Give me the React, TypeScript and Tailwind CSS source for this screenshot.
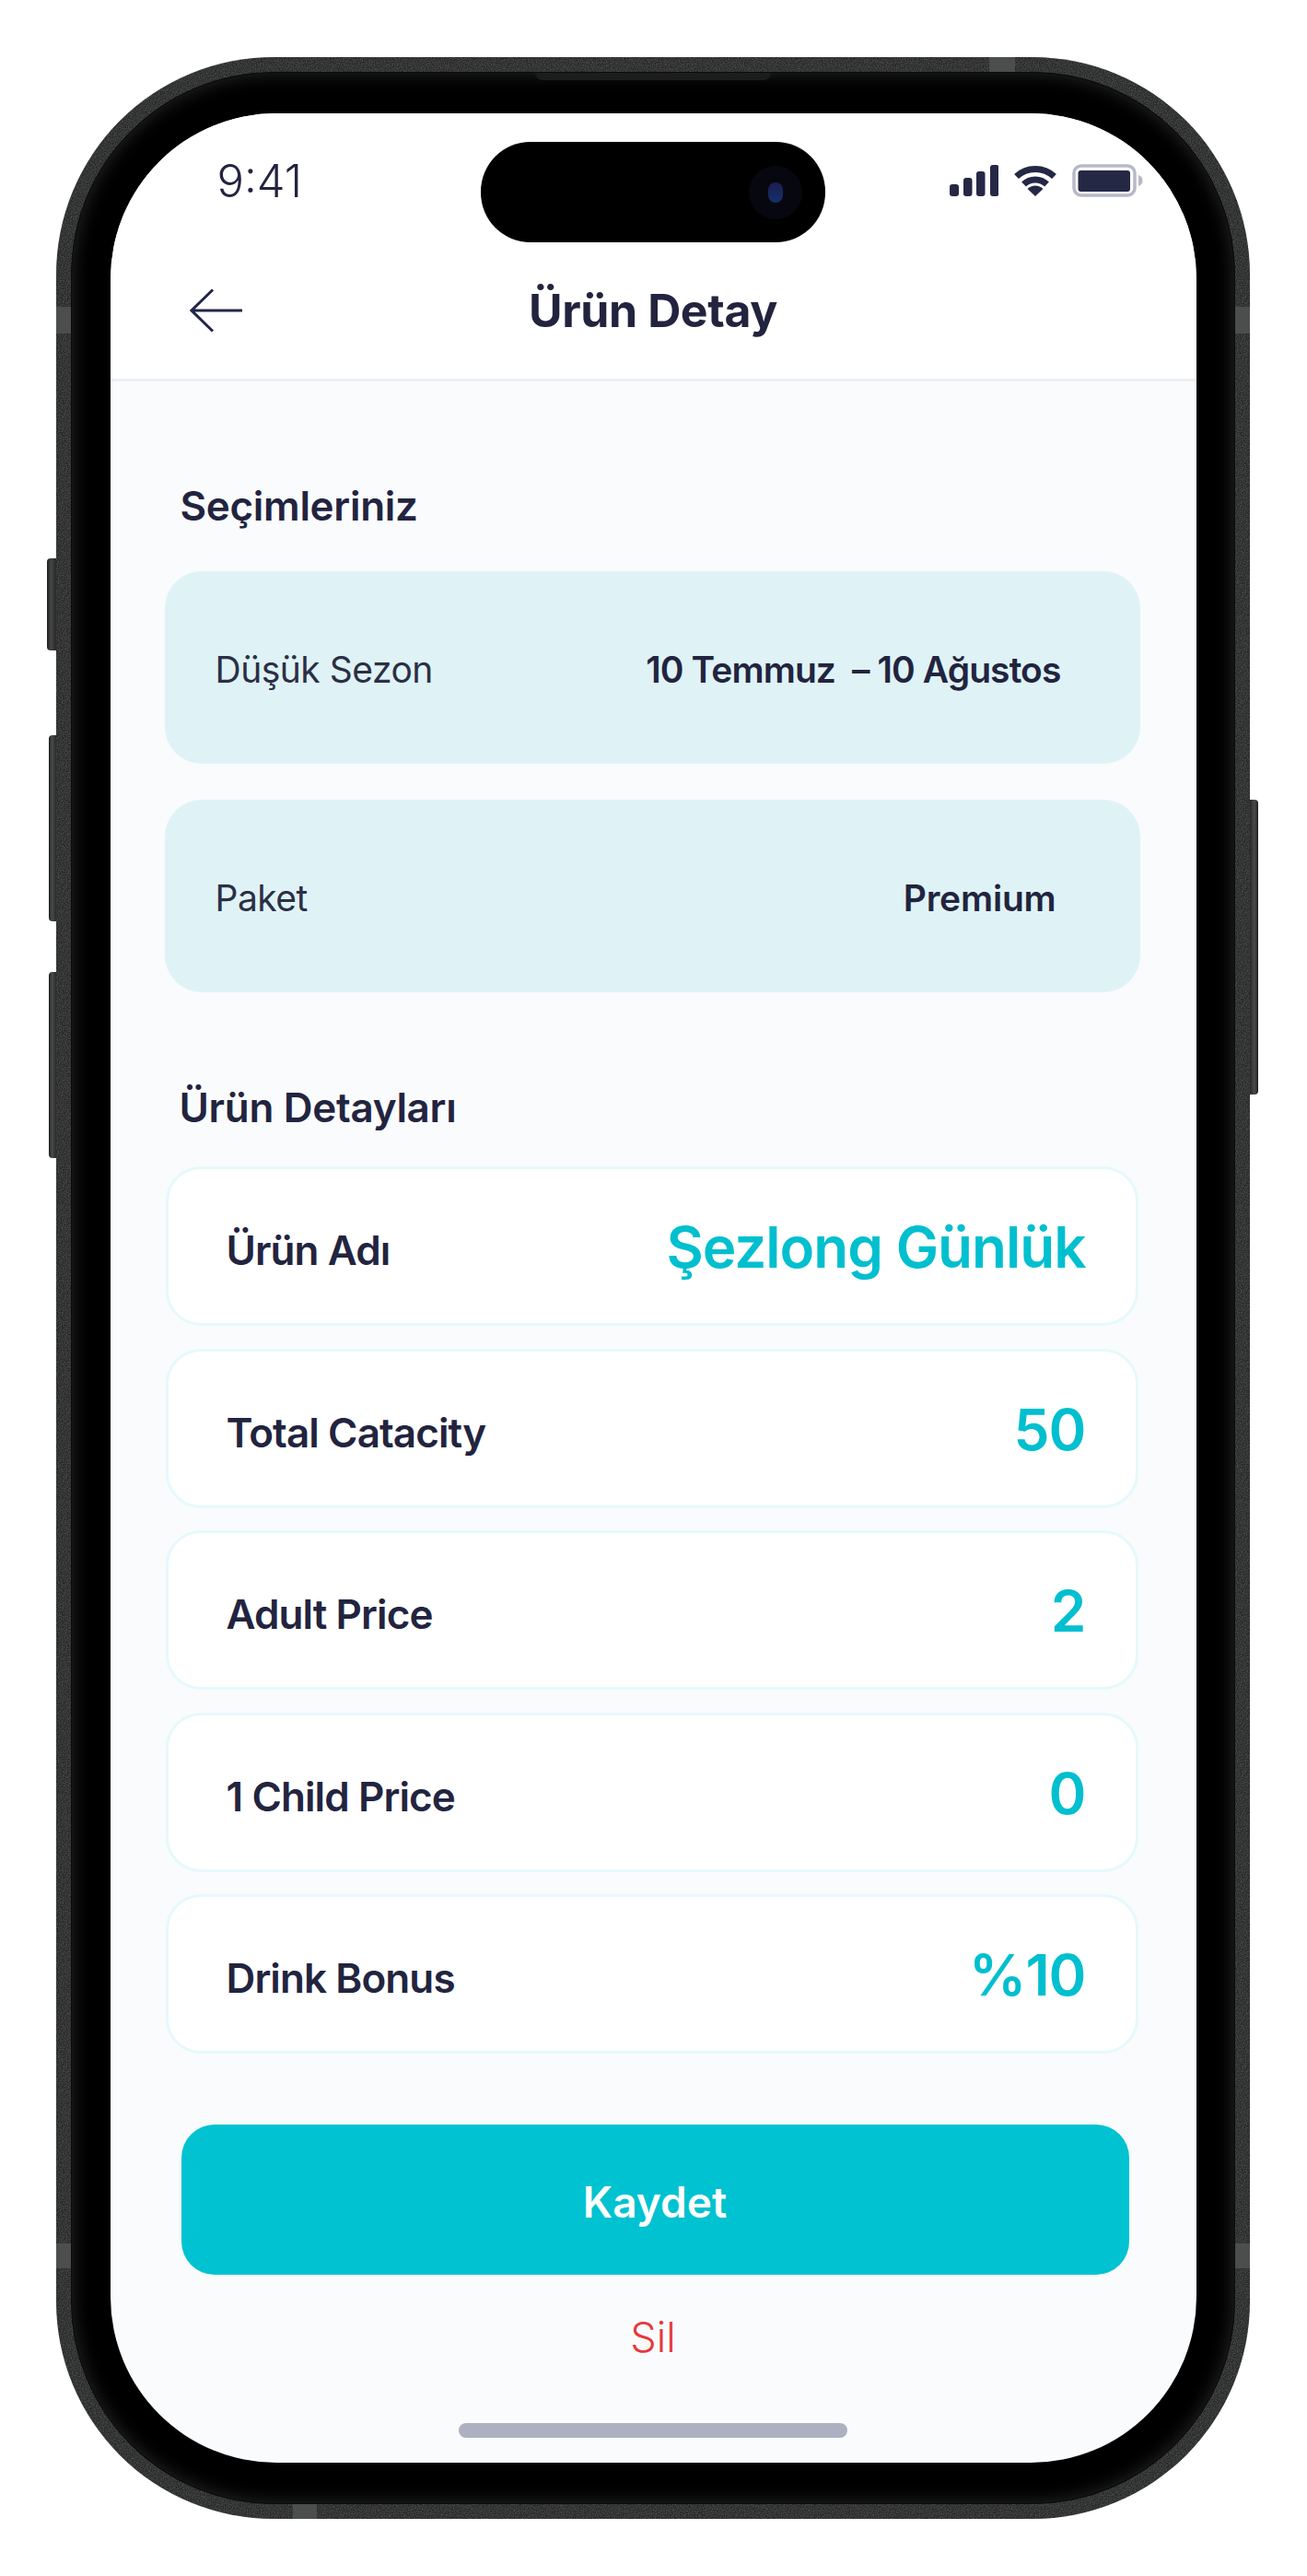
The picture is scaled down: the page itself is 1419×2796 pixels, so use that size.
const choices = [
  { label: "Düşük Sezon", value: "10 Temmuz  – 10 Ağustos", valueClass: "mr-0 tracking-[-0.9px]" },
  { label: "Paket", value: "Premium", valueClass: "mr-[5px] tracking-[-0.2px]" },
];

const details = [
  { label: "Ürün Adı", value: "Şezlong Günlük" },
  { label: "Total Catacity", value: "50" },
  { label: "Adult Price", value: "2" },
  { label: "1 Child Price", value: "0" },
  { label: "Drink Bonus", value: "%10" },
];

function StatusIcons() {
  return (
    <div className="flex items-center gap-[16px]">
      {/* signal */}
      <svg width="53" height="35" viewBox="0 0 53 35" fill="#252845">
        <rect x="0" y="21" width="10" height="13" rx="3" />
        <rect x="15" y="14" width="9.5" height="20" rx="3" />
        <rect x="29" y="7" width="9.5" height="27" rx="3" />
        <rect x="44" y="0" width="9.5" height="34" rx="3" />
      </svg>
      {/* wifi */}
      <svg width="48" height="36" viewBox="0 0 48 36" fill="none" stroke="#252845">
        <path d="M3.5 13.5A30 30 0 0 1 44.5 13.5" strokeWidth="7" />
        <path d="M11.5 22A18 18 0 0 1 36.5 22" strokeWidth="7" />
        <path d="M24 35L15.5 27A12 12 0 0 1 32.500 27Z" fill="#252845" stroke="none" />
      </svg>
      {/* battery */}
      <svg width="77" height="36" viewBox="0 0 77 36" fill="none">
        <rect x="2" y="2" width="66" height="32" rx="8" stroke="#B7B9C6" strokeWidth="3.5" />
        <rect x="6.500" y="7" width="56.500" height="23" rx="3" fill="#252845" />
        <path d="M72 12C75 13 76.500 15 76.500 18C76.500 21 75 23 72 24Z" fill="#B7B9C6" />
      </svg>
    </div>
  );
}

export default function App() {
  return (
    <div className="relative h-[2796px] w-[1419px] overflow-hidden bg-white pl-[61px] pt-[62px] [font-family:Inter,sans-serif]">
      {/* Phone body */}
      <div className="relative">
        {/* Side buttons */}
        <div className="absolute -left-[10px] top-[544px] h-[100px] w-[11px] rounded-l-[4px] bg-[linear-gradient(90deg,#1e1e1e,#464646_40%,#222)]" />
        <div className="absolute -left-[8px] top-[736px] h-[202px] w-[9px] rounded-l-[4px] bg-[linear-gradient(90deg,#1e1e1e,#4a4a4a_40%,#222)]" />
        <div className="absolute -left-[8px] top-[993px] h-[202px] w-[9px] rounded-l-[4px] bg-[linear-gradient(90deg,#1e1e1e,#4a4a4a_40%,#222)]" />
        <div className="absolute left-[1295px] top-[806px] h-[320px] w-[10px] rounded-r-[4px] bg-[linear-gradient(270deg,#1e1e1e,#4a4a4a_40%,#222)]" />

        <div className="relative h-[2672px] w-[1296px] rounded-[236px] bg-[#232424] p-[16px]">
          {/* Metal grain */}
          <svg className="absolute inset-0 h-full w-full rounded-[236px]">
            <filter id="grain">
              <feTurbulence type="fractalNoise" baseFrequency="0.8" numOctaves="2" />
              <feColorMatrix values="0 0 0 0 0.55  0 0 0 0 0.55  0 0 0 0 0.55  0 0 0 0.5 -0.14" />
            </filter>
            <rect width="100%" height="100%" filter="url(#grain)" />
          </svg>

          {/* Antenna bands */}
          <div className="absolute left-[1013px] top-0 h-[16px] w-[28px] bg-[#4c4d4d]" />
          <div className="absolute left-[257px] bottom-0 h-[16px] w-[26px] bg-[#4c4d4d]" />
          <div className="absolute left-0 top-[271px] h-[29px] w-[16px] bg-[#4c4d4d]" />
          <div className="absolute right-0 top-[271px] h-[29px] w-[16px] bg-[#4c4d4d]" />
          <div className="absolute left-0 top-[2373px] h-[27px] w-[16px] bg-[#4c4d4d]" />
          <div className="absolute right-0 top-[2373px] h-[27px] w-[16px] bg-[#4c4d4d]" />

          {/* Bezel */}
          <div className="relative flex h-full w-full items-center justify-center rounded-[220px] border border-[#0b0b0b] bg-black shadow-[inset_0_0_20px_#2a2a2a]">
            <div className="absolute left-[503px] top-[0px] h-[8px] w-[256px] rounded-b-[8px] bg-[#1c1c1c]" />

            {/* Screen */}
            <div className="relative h-[2550px] w-[1179px] overflow-hidden rounded-[180px] bg-[#F9FBFD] text-[#22243F]">
              {/* Dynamic island */}
              <div className="absolute left-[402px] top-[31px] flex h-[109px] w-[374px] items-center justify-end rounded-[54px] bg-black pr-[25px]">
                <div className="flex h-[58px] w-[58px] items-center justify-center rounded-full bg-[#07070f]">
                  <div className="h-[22px] w-[16px] rounded-full bg-[linear-gradient(180deg,#1c1d52,#13306a)]" />
                </div>
              </div>

              {/* Header */}
              <div className="h-[291px] border-b-[3px] border-[#EDEFF2] bg-white">
                <div className="flex h-[146px] items-center justify-between pl-[116px] pr-[58px]">
                  <span className="text-[49px] font-light leading-none">9:41</span>
                  <StatusIcons />
                </div>
                <div className="relative flex h-[136px] items-center justify-center">
                  <svg className="absolute left-[86px] top-[44px]" width="58" height="48" viewBox="0 0 58 48" fill="none" stroke="#22264A" strokeWidth="3">
                    <path d="M57 24H2M25 1.500L2 24L25 46.500" />
                  </svg>
                  <h1 className="text-[50px] font-bold leading-none tracking-[-0.4px]">Ürün Detay</h1>
                </div>
              </div>

              {/* Selections */}
              <div className="px-[59px] pt-[105px]">
                <h2 className="ml-[17px] h-[60px] text-[44px] font-semibold leading-[60px] tracking-[-0.3px]">Seçimleriniz</h2>
                <div className="mt-[41px] flex flex-col gap-[39px] pr-[2px]">
                  {choices.map((item) => (
                    <div key={item.label} className="flex h-[209px] items-center justify-between rounded-[40px] bg-[#DFF3F6] pl-[55px] pr-[86px] pt-[6px]">
                      <span className="text-[39px] font-normal tracking-[-0.5px] text-[#2C2F45]">{item.label}</span>
                      <span className={`whitespace-pre text-[39px] font-semibold ${item.valueClass}`}>{item.value}</span>
                    </div>
                  ))}
                </div>

                {/* Product details */}
                <h2 className="ml-[16px] mt-[95px] h-[60px] text-[44px] font-semibold leading-[60px] tracking-[-0.3px]">Ürün Detayları</h2>
                <div className="mt-[34px] flex flex-col gap-[24.5px] pl-[1px] pr-[4px]">
                  {details.map((row) => (
                    <div key={row.label} className="flex h-[173px] items-center justify-between rounded-[38px] border-[3px] border-[#E6F9FA] bg-white pl-[63px] pr-[54px]">
                      <span className="pt-[9px] text-[44px] font-semibold tracking-[-0.9px]">{row.label}</span>
                      <span className="pt-[3px] text-[62px] font-semibold leading-none tracking-[-1px] text-[#00BFCF]">{row.value}</span>
                    </div>
                  ))}
                </div>

                {/* Actions */}
                <button className="ml-[18px] mt-[77px] flex h-[163px] w-[1029px] items-center justify-center rounded-[36px] bg-[#00C2D1] pt-[6px] text-[46px] font-semibold text-white">
                  Kaydet
                </button>
                <div className="mt-[38px] h-[60px] text-center text-[45px] font-light leading-[60px] text-[#E5383B]">Sil</div>
              </div>
              <div className="mx-auto mt-[63px] h-[16px] w-[422px] rounded-full bg-[#ADB0C0]" />
            </div>
          </div>
        </div>
      </div>
    </div>
  );
}
